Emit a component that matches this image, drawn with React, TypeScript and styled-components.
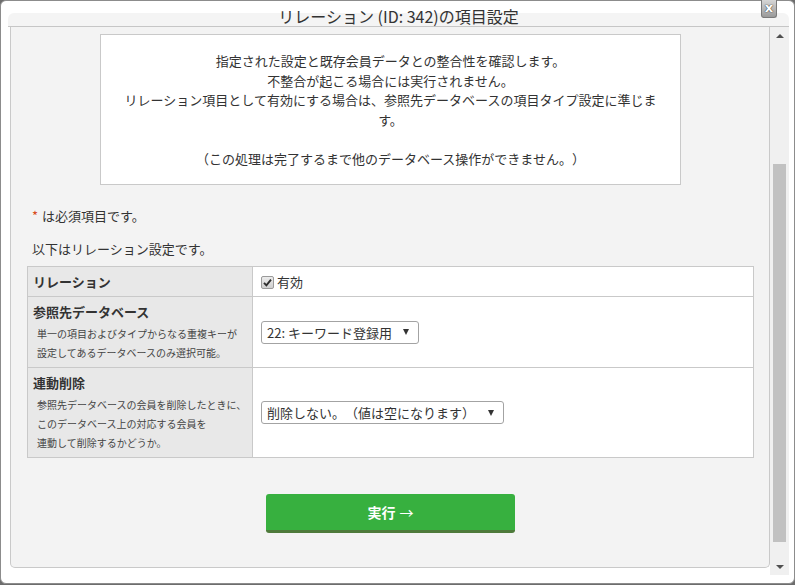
import React from 'react';
import styled, { createGlobalStyle } from 'styled-components';

const GlobalStyle = createGlobalStyle`
  html, body {
    margin: 0;
    padding: 0;
  }
  body {
    background: #6d6d6d;
    font-family: "Noto Sans CJK JP", "Noto Sans", sans-serif;
    color: #333;
    text-spacing-trim: space-all;
  }
`;

const Dialog = styled.div`
  position: relative;
  box-sizing: border-box;
  width: 795px;
  height: 584px;
  background: #fff;
  border: 1px solid #8c8c8c;
  border-radius: 6px;
  padding: 0 5px 8px 7px;
  display: flex;
  flex-direction: column;
`;

const Header = styled.div`
  position: relative;
  box-sizing: border-box;
  height: 26px;
  padding-top: 6px;
  border-bottom: 1px solid #c6c6c6;
  text-align: center;
  font-size: 16px;
  line-height: 19px;
  color: #333;

  &::before {
    content: '';
    position: absolute;
    top: 12px;
    left: 0;
    right: 0;
    bottom: 0;
    background: #f4f4f4;
    border-radius: 6px 6px 0 0;
  }
`;

const Title = styled.span`
  position: relative;
`;

const CloseButton = styled.div`
  position: absolute;
  top: -1px;
  right: 17px;
  box-sizing: border-box;
  width: 16px;
  height: 18px;
  border: 1px solid #7a7a7a;
  border-top: none;
  border-radius: 0 0 3px 3px;
  background: linear-gradient(#d6d6d6, #9a9a9a);
  color: #fff;
  font: bold 13px/16px "DejaVu Sans", sans-serif;
  text-align: center;
  text-shadow: 0 0 1px #333, 0 0 1px #333;
`;

const Body = styled.div`
  flex: 1;
  display: flex;
  min-height: 0;
`;

const Panel = styled.div`
  flex: 1;
  margin: 0 0 7px 2px;
  padding: 7px 15px 0 16px;
  background: #f3f3f3;
  border: 1px solid #c9c9c9;
  border-top: none;
  border-radius: 0 0 5px 5px;
`;

const InfoBox = styled.div`
  box-sizing: border-box;
  width: 581px;
  margin: 0 auto;
  padding: 16px 20px;
  background: #fff;
  border: 1px solid #c9c9c9;
  text-align: center;
  font-size: 13px;
  line-height: 19.5px;
  color: #333;
`;

const Note = styled.p<{ $gap: number }>`
  margin: ${(p) => p.$gap}px 0 0;
  padding-left: 5px;
  font-size: 13px;
  line-height: 20px;
  color: #333;
`;

const Required = styled.span`
  color: #d84a1b;
  margin-right: 4px;
`;

const Table = styled.table`
  width: 727px;
  margin-top: 7px;
  border-collapse: collapse;
  font-size: 13px;
`;

const LabelCell = styled.th`
  width: 214px;
  padding: 6px 5px 5px;
  background: #e8e8e8;
  border: 1px solid #c9c9c9;
  text-align: left;
  vertical-align: top;
  font-weight: normal;
`;

const LabelTitle = styled.div`
  font-weight: bold;
  line-height: 18px;
  color: #333;
`;

const LabelHelp = styled.div`
  margin-top: 3px;
  padding-left: 4px;
  font-size: 10px;
  line-height: 19px;
  color: #444;
  white-space: nowrap;
`;

const ValueCell = styled.td`
  padding: 0 8px;
  background: #fff;
  border: 1px solid #c9c9c9;
  vertical-align: middle;
`;

const CheckLabel = styled.label`
  display: inline-flex;
  align-items: center;
  gap: 3px;
  line-height: 18px;
  color: #333;
`;

const CheckBox = styled.span`
  box-sizing: border-box;
  display: inline-flex;
  align-items: center;
  justify-content: center;
  width: 13px;
  height: 13px;
  border: 1px solid #9a9a9a;
  border-radius: 2px;
  background: linear-gradient(#ececec, #cfcfcf);
`;

const Select = styled.div<{ $width: number }>`
  box-sizing: border-box;
  display: flex;
  align-items: center;
  justify-content: space-between;
  width: ${(p) => p.$width}px;
  height: 23px;
  padding: 0 9px 0 5px;
  background: #fff;
  border: 1px solid #a3a3a3;
  border-radius: 3px;
  font-size: 13px;
  color: #333;
  white-space: nowrap;
`;

const Caret = styled.span`
  width: 0;
  height: 0;
  border-left: 3.5px solid transparent;
  border-right: 3.5px solid transparent;
  border-top: 6px solid #333;
`;

const RunButton = styled.button`
  display: block;
  box-sizing: border-box;
  width: 249px;
  height: 39px;
  margin: 36px auto 0;
  padding: 0;
  background: #37b03f;
  border: none;
  border-bottom: 3px solid #4e7a3b;
  border-radius: 3px;
  color: #fff;
  font: bold 14px "Noto Sans CJK JP", sans-serif;
`;

const ButtonArrow = styled.span`
  margin-left: 4px;
  font-weight: normal;
`;

const ScrollBar = styled.div`
  width: 19px;
  display: flex;
  flex-direction: column;
  background: #f0f0f0;
`;

const ArrowButton = styled.div<{ $down?: boolean }>`
  height: 17px;
  display: flex;
  align-items: center;
  justify-content: center;

  &::after {
    content: '';
    width: 0;
    height: 0;
    border-left: 4px solid transparent;
    border-right: 4px solid transparent;
    ${(p) => (p.$down ? 'border-top: 4px solid #505050;' : 'border-bottom: 4px solid #505050;')}
  }
`;

const Track = styled.div`
  flex: 1;
  padding: 120px 3px 0;
`;

const Thumb = styled.div`
  height: 378px;
  background: #c1c1c1;
`;

const Check = () => (
  <svg width="9" height="9" viewBox="0 0 9 9">
    <path d="M1 4.8 L3.4 7.3 L8 1.6" fill="none" stroke="#2e2e2e" strokeWidth="1.9" />
  </svg>
);

export default function App() {
  return (
    <>
      <GlobalStyle />
      <Dialog>
        <Header>
          <Title>リレーション (ID: 342)の項目設定</Title>
        </Header>
        <CloseButton>x</CloseButton>
        <Body>
          <Panel>
            <InfoBox>
              指定された設定と既存会員データとの整合性を確認します。
              <br />
              不整合が起こる場合には実行されません。
              <br />
              リレーション項目として有効にする場合は、参照先データベースの項目タイプ設定に準じま
              <br />
              す。
              <br />
              <br />
              （この処理は完了するまで他のデータベース操作ができません。）
            </InfoBox>

            <Note $gap={21}>
              <Required>*</Required>は必須項目です。
            </Note>
            <Note $gap={13}>以下はリレーション設定です。</Note>

            <Table>
              <tbody>
                <tr>
                  <LabelCell>
                    <LabelTitle>リレーション</LabelTitle>
                  </LabelCell>
                  <ValueCell>
                    <CheckLabel>
                      <CheckBox>
                        <Check />
                      </CheckBox>
                      有効
                    </CheckLabel>
                  </ValueCell>
                </tr>
                <tr>
                  <LabelCell>
                    <LabelTitle>参照先データベース</LabelTitle>
                    <LabelHelp>
                      単一の項目およびタイプからなる重複キーが
                      <br />
                      設定してあるデータベースのみ選択可能。
                    </LabelHelp>
                  </LabelCell>
                  <ValueCell>
                    <Select $width={158}>
                      22: キーワード登録用
                      <Caret />
                    </Select>
                  </ValueCell>
                </tr>
                <tr>
                  <LabelCell>
                    <LabelTitle>連動削除</LabelTitle>
                    <LabelHelp>
                      参照先データベースの会員を削除したときに、
                      <br />
                      このデータベース上の対応する会員を
                      <br />
                      連動して削除するかどうか。
                    </LabelHelp>
                  </LabelCell>
                  <ValueCell>
                    <Select $width={243}>
                      削除しない。（値は空になります）
                      <Caret />
                    </Select>
                  </ValueCell>
                </tr>
              </tbody>
            </Table>

            <RunButton type="button">
              実行<ButtonArrow>→</ButtonArrow>
            </RunButton>
          </Panel>
          <ScrollBar>
            <ArrowButton />
            <Track>
              <Thumb />
            </Track>
            <ArrowButton $down />
          </ScrollBar>
        </Body>
      </Dialog>
    </>
  );
}
